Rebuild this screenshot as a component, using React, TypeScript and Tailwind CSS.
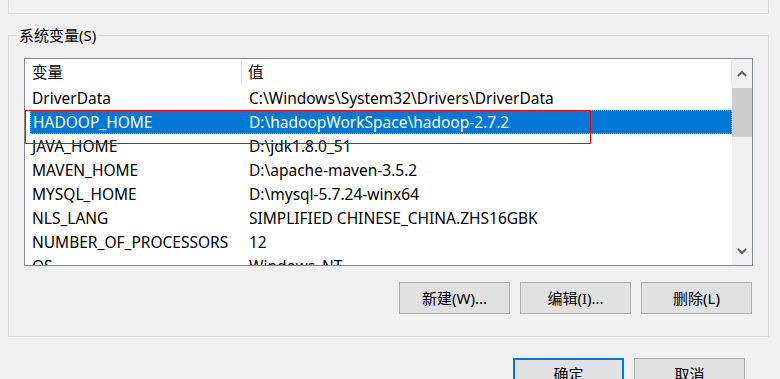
import React from "react";

const FONT = "font-['Noto_Sans','Noto_Sans_CJK_SC',sans-serif]";

const rows = [
  { name: "DriverData", value: "C:\\Windows\\System32\\Drivers\\DriverData" },
  { name: "HADOOP_HOME", value: "D:\\hadoopWorkSpace\\hadoop-2.7.2", selected: true },
  { name: "JAVA_HOME", value: "D:\\jdk1.8.0_51" },
  { name: "MAVEN_HOME", value: "D:\\apache-maven-3.5.2" },
  { name: "MYSQL_HOME", value: "D:\\mysql-5.7.24-winx64" },
  { name: "NLS_LANG", value: "SIMPLIFIED CHINESE_CHINA.ZHS16GBK" },
  { name: "NUMBER_OF_PROCESSORS", value: "12" },
  { name: "OS", value: "Windows_NT" },
];

function Chevron({ down }: { down?: boolean }) {
  return (
    <svg width="10" height="7" viewBox="0 0 10 7" className={down ? "rotate-180" : ""}>
      <path d="M1 6 L5 2 L9 6" fill="none" stroke="#606060" strokeWidth="2" />
    </svg>
  );
}

function WinButton({ label, primary }: { label: string; primary?: boolean }) {
  return (
    <button
      className={`h-[32px] w-[111px] bg-[#e1e1e1] text-[15px] text-black ${
        primary ? "border-2 border-[#0078d7]" : "border border-[#adadad]"
      }`}
    >
      {label}
    </button>
  );
}

export default function App() {
  return (
    <div className={`h-[379px] w-[780px] overflow-hidden bg-[#f0f0f0] ${FONT} text-[15.5px] text-black`}>
      {/* bottom edge of the user-variables group above */}
      <div className="ml-2 h-[14px] w-[761px] border-x border-b border-[#dcdcdc]" />

      {/* system variables group */}
      <div className="ml-2 mt-[21px] h-[302px] w-[761px] border border-[#dcdcdc] px-[15px]">
        <div className="-mt-[11px] ml-[-7px] w-fit bg-[#f0f0f0] px-[2px] text-[15px] leading-[20px]">系统变量(S)</div>

        <div className="relative mt-[13px] flex h-[208px] w-[729px] border border-[#828790] bg-white">
          <div className="flex-1 overflow-hidden">
            <div className="flex h-[27px] items-center">
              <div className="w-[217px] border-r border-[#e5e5e5] pl-[7px] leading-[25px]">变量</div>
              <div className="flex-1 border-r border-[#e5e5e5] pl-[6px] leading-[25px]">值</div>
            </div>
            {rows.map((r) => (
              <div
                key={r.name}
                className={`flex h-[24px] items-center leading-[24px] ${
                  r.selected ? "ml-[5px] border border-dotted border-[#e8962a] bg-[#0078d7] text-white" : ""
                }`}
              >
                <div className={r.selected ? "w-[211px] pl-[2px]" : "w-[217px] pl-[7px]"}>{r.name}</div>
                <div className="pl-[7px] whitespace-nowrap">{r.value}</div>
              </div>
            ))}
          </div>

          <div className="flex w-[20px] flex-col bg-[#f0f0f0]">
            <div className="flex h-[29px] items-center justify-center">
              <Chevron />
            </div>
            <div className="h-[49px] bg-[#cdcdcd]" />
            <div className="flex-1" />
            <div className="flex h-[28px] items-center justify-center">
              <Chevron down />
            </div>
          </div>

          <div className="pointer-events-none absolute left-0 top-[51px] h-[34px] w-[566px] border border-[#ff0000]" />
        </div>

        <div className="mt-[16px] flex w-[728px] justify-end gap-[10px]">
          <WinButton label="新建(W)..." />
          <WinButton label="编辑(I)..." />
          <WinButton label="删除(L)" />
        </div>
      </div>

      <div className="mt-[21px] flex w-[745px] justify-end gap-[10px]">
        <WinButton label="确定" primary />
        <WinButton label="取消" />
      </div>
    </div>
  );
}
